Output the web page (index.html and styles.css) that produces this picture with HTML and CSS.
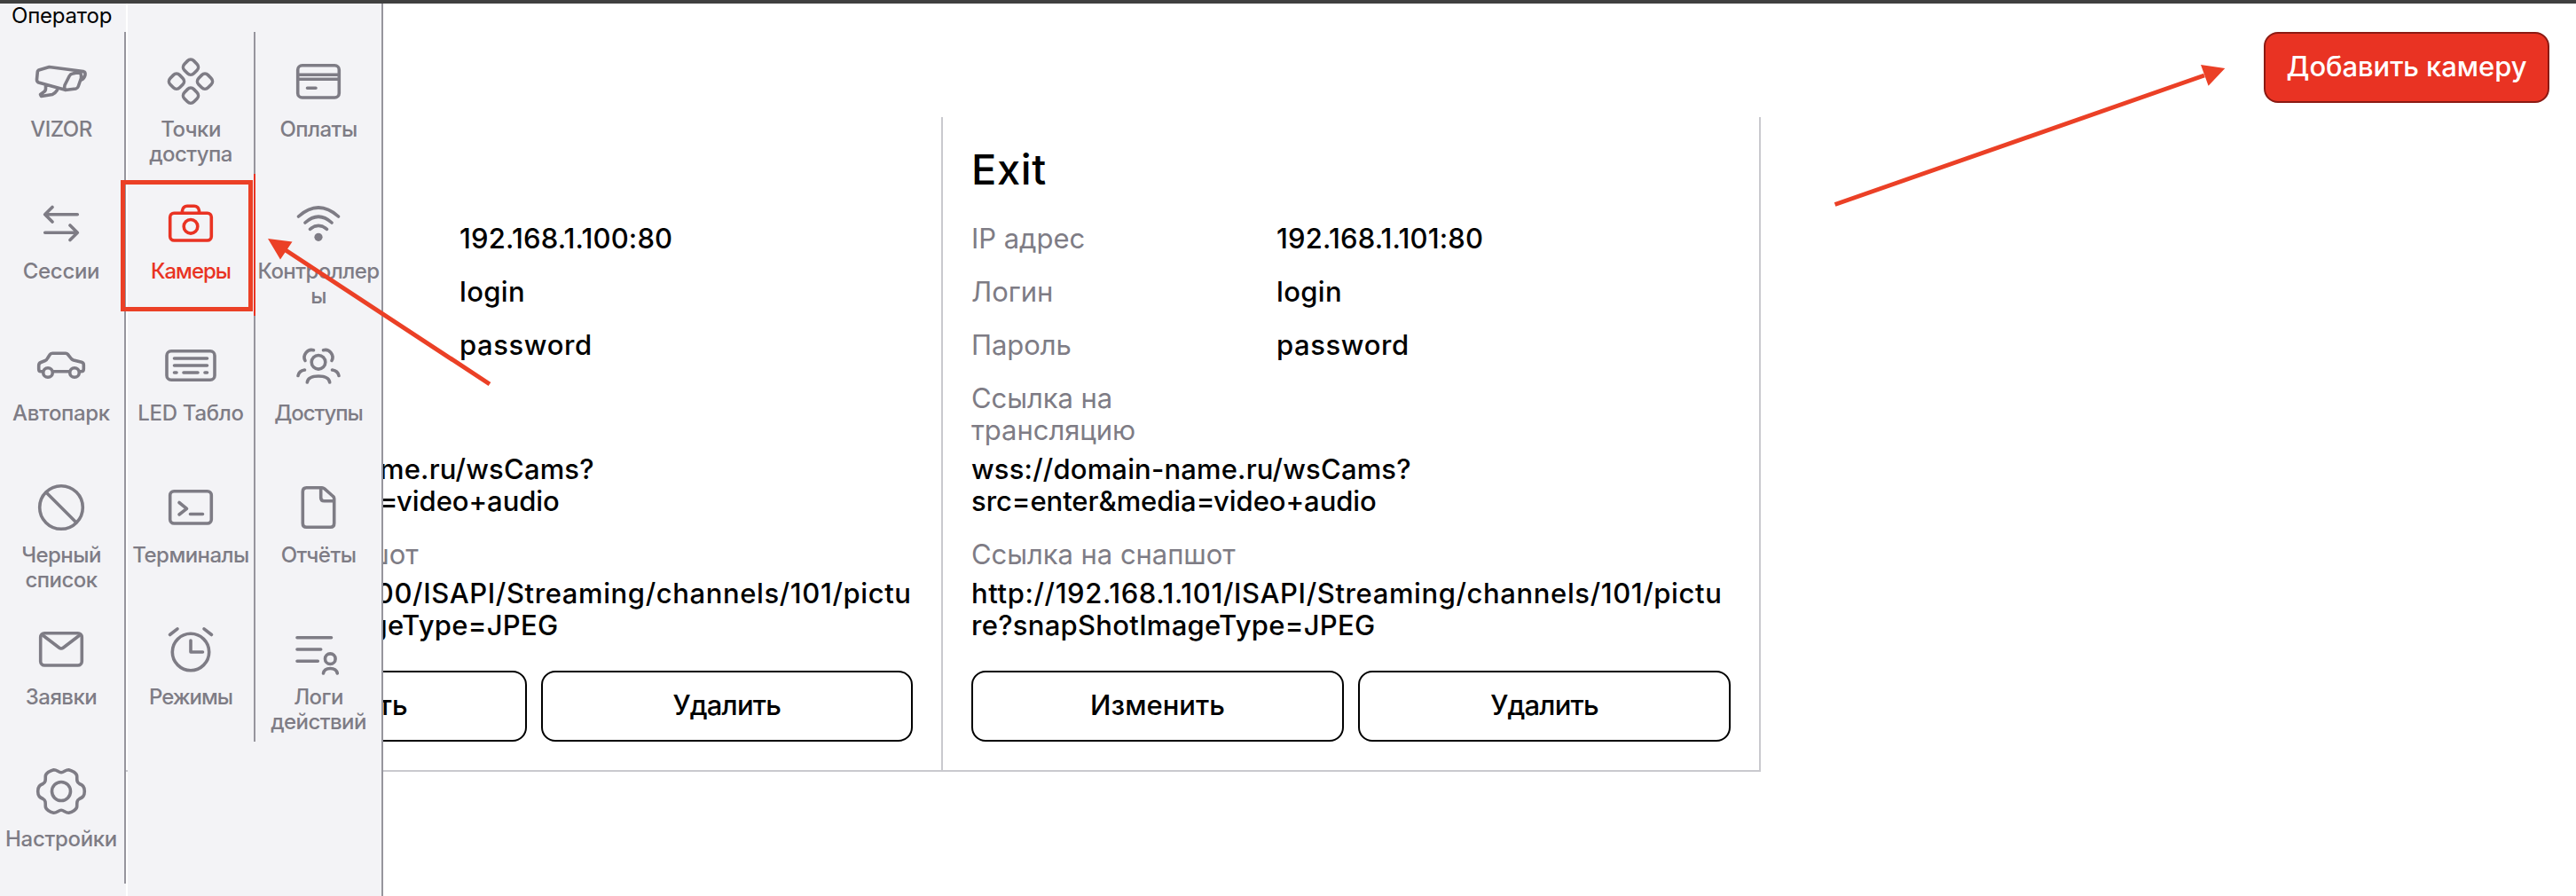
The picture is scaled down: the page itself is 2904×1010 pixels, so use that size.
FILE: index.html
```html
<!DOCTYPE html>
<html lang="ru">
<head>
<meta charset="utf-8">
<title>Камеры</title>
<link rel="stylesheet" href="styles.css">
</head>
<body>
<div class="page">
  <main class="main">
    <header class="toolbar"><button class="btn btn-primary">Добавить камеру</button></header>
    <section class="cards">
      <article class="card card-covered">
        <h2 class="card-title"></h2>
        <dl class="fields">
          <div class="field"><dt></dt><dd class="ip">192.168.1.100:80</dd></div>
          <div class="field"><dt></dt><dd class="login">login</dd></div>
          <div class="field"><dt></dt><dd class="password">password</dd></div>
          <div class="field stacked"><dt class="narrow"></dt><dd class="stream"><span class="stream-host">wss://domain-name.ru/wsCams?</span><br>src=enter&amp;media=video+audio</dd></div>
          <div class="field stacked"><dt>Ссылка на снапшот</dt><dd class="snapshot"><span class="snapshot-path">http://192.168.1.100/ISAPI/Streaming/channels/101/pictu</span><br>re?snapShotImageType=JPEG</dd></div>
        </dl>
        <div class="actions"><button class="btn">Изменить</button><button class="btn delete">Удалить</button></div>
      </article>
      <article class="card">
        <h2 class="card-title">Exit</h2>
        <dl class="fields">
          <div class="field"><dt>IP адрес</dt><dd class="ip">192.168.1.101:80</dd></div>
          <div class="field"><dt>Логин</dt><dd class="login">login</dd></div>
          <div class="field"><dt>Пароль</dt><dd class="password">password</dd></div>
          <div class="field stacked"><dt class="narrow">Ссылка на трансляцию</dt><dd class="stream"><span class="stream-host">wss://domain-name.ru/wsCams?</span><br>src=enter&amp;media=video+audio</dd></div>
          <div class="field stacked"><dt>Ссылка на снапшот</dt><dd class="snapshot"><span class="snapshot-path">http://192.168.1.101/ISAPI/Streaming/channels/101/pictu</span><br>re?snapShotImageType=JPEG</dd></div>
        </dl>
        <div class="actions"><button class="btn">Изменить</button><button class="btn delete">Удалить</button></div>
      </article>
    </section>
  </main>

  <nav class="sidebar">
    <div class="panel panel-main">
      <div class="role">Оператор</div>
      <div class="column column-first">
        <a class="item"><svg class="icon" viewBox="0 0 64 64"><path d="M35.5 41 6.5 33Q4.300 32 4.500 29.500L5.300 21Q5.500 19.300 7.500 18.700L18.500 15.500 57 20.500Q59.500 21 59 24.500 58 28.500 55 30M57 20.500 45 23Q42.500 23.300 41.300 25.500L36 36Q35 38.500 36.500 41.500L48.500 40Q50.500 39.500 51.200 37.500L54.500 28Q55 25 53.500 22M14.500 36.500V40Q14.500 42.500 12 44L8.500 46.500 9.500 48.500 22 46.500Q25 45.500 27.500 41.500"/></svg><span>VIZOR</span></a>
        <a class="item"><svg class="icon" viewBox="0 0 64 64"><path d="M50.300 21.700H13.700M22 13.500 13.700 21.700 22 30M13.700 42.300H50.300M42 34 50.300 42.300 42 50.500"/></svg><span class="wide">Сессии</span></a>
        <a class="item"><svg class="icon" viewBox="0 0 64 64"><path d="M11.500 38.700H9Q6.700 38.700 6.700 36V32Q6.700 29.500 9 28.500L14 26.500Q15.500 26 16.500 24L19 20Q20 18.300 22 18.300H37Q38.500 18.300 39.500 19.500L43.500 24.500Q44.500 25.500 46 26L55 28.300Q57.300 29 57.300 31V36Q57.300 38.700 54.500 38.700H52.500M22.500 38.700H41.500"/><circle cx="17" cy="40" r="5.300"/><circle cx="47" cy="40" r="5.300"/></svg><span class="wide">Автопарк</span></a>
        <a class="item"><svg class="icon" viewBox="0 0 64 64"><circle cx="32" cy="32" r="24.300"/><path d="M15.500 15.500 48.500 48.500"/></svg><span>Черный<br>список</span></a>
        <a class="item"><svg class="icon" viewBox="0 0 64 64"><rect x="8.700" y="13.700" width="46.600" height="36.300" rx="4.500"/><path d="M10.500 15.500 29.500 30Q32 32 34.500 30L53.500 15.500"/></svg><span>Заявки</span></a>
        <a class="item"><svg class="icon" viewBox="0 0 64 64"><circle cx="32" cy="32" r="10.500"/><path d="M32 10.700C29 10.700 27 7.500 23.500 7.700 20 8.500 14.300 11.500 14.300 15 14.300 20 14.300 22 11.500 23.500 8 25 5.700 26.500 5.700 32S8 39 11.500 40.500C14.300 42 14.300 44 14.300 49 14.300 52.500 20 55.500 23.500 56.300 27 56.500 29 53.300 32 53.300S37 56.500 40.500 56.300C44 55.500 49.700 52.500 49.700 49 49.700 44 49.700 42 52.500 40.500 56 39 58.300 37.500 58.300 32S56 25 52.500 23.500C49.700 22 49.700 20 49.700 15 49.700 11.500 44 8.500 40.500 7.700 37 7.500 35 10.700 32 10.700Z"/></svg><span class="wide">Настройки</span></a>
      </div>
    </div>
    <div class="panel panel-extra">
      <div class="column">
        <a class="item"><svg class="icon" viewBox="0 0 64 64"><rect x="24.500" y="8.200" width="15" height="15" rx="5" transform="rotate(45 32 15.700)"/><rect x="8.500" y="24.200" width="15" height="15" rx="5" transform="rotate(45 16 31.700)"/><rect x="40.500" y="24.200" width="15" height="15" rx="5" transform="rotate(45 48 31.700)"/><rect x="24.500" y="40.200" width="15" height="15" rx="5" transform="rotate(45 32 47.700)"/></svg><span>Точки<br>доступа</span></a>
        <a class="item active"><svg class="icon" viewBox="0 0 64 64"><rect x="8.700" y="20.300" width="46.600" height="30.700" rx="4.500"/><path d="M22.500 19.500V17.500Q23.500 12.300 28 12.300H36Q40.500 12.300 41.500 17.500V19.500"/><circle cx="32" cy="35.300" r="7.800"/></svg><span class="tight">Камеры</span></a>
        <a class="item"><svg class="icon" viewBox="0 0 64 64"><rect x="5" y="15.700" width="54" height="32.600" rx="5"/><path d="M13.500 24H50.500M13.500 32H50.500M13.500 40H16M24 40H40M48 40H50.500"/></svg><span class="wide">LED Табло</span></a>
        <a class="item"><svg class="icon" viewBox="0 0 64 64"><rect x="8.700" y="13.700" width="46.600" height="36.300" rx="4.500"/><path d="M19 26.500 27.500 33.300 19 40M31.500 39.500H45.500"/></svg><span>Терминалы</span></a>
        <a class="item"><svg class="icon" viewBox="0 0 64 64"><circle cx="32" cy="35" r="20.700"/><path d="M32 22V35H45.500M8.500 15.500 17 8.800M47 8.800 55.500 15.500"/></svg><span class="tight">Режимы</span></a>
      </div>
      <div class="column column-last">
        <a class="item"><svg class="icon" viewBox="0 0 64 64"><rect x="8.700" y="13.700" width="46.600" height="36.300" rx="5"/><path d="M9 24.300H55M9 29.300H55M19.500 39.300H29"/></svg><span>Оплаты</span></a>
        <a class="item"><svg class="icon" viewBox="0 0 64 64"><path d="M9.500 24Q32 4 54.500 24M17 31Q32 17.500 47 31M22.500 38.300Q32 30.500 41.500 38.300"/><circle class="solid" cx="32" cy="47.300" r="4.600"/></svg><span>Контроллер<br>ы</span></a>
        <a class="item"><svg class="icon" viewBox="0 0 64 64"><circle cx="32" cy="28.300" r="7.800"/><path d="M26.500 14.700A8.300 8.300 0 0 0 17 26.500M37.500 14.700A8.300 8.300 0 0 1 47 26.500M19.300 51C20 46.500 25 44 32 44S44 46.500 44.700 51M9 43.500Q10 38 16.500 37M55 43.500Q54 38 47.500 37"/></svg><span class="tight">Доступы</span></a>
        <a class="item"><svg class="icon" viewBox="0 0 64 64"><path d="M18.500 9.700H36Q37.500 9.700 38.500 10.700L48.500 19.500Q49.700 20.500 49.700 22V50Q49.700 54.300 45.500 54.300H18.500Q14.300 54.300 14.300 50V14Q14.300 9.700 18.500 9.700ZM34.700 10V21Q34.700 24.700 38.500 24.700H49.500"/></svg><span>Отчёты</span></a>
        <a class="item"><svg class="icon" viewBox="0 0 64 64"><path d="M8 18.700H46.500M8 32H34.700M8 45.300H31.300M37.500 59Q38.500 53.500 45.300 53.500T53.300 59"/><circle cx="45.300" cy="42.700" r="5.800"/></svg><span>Логи<br>действий</span></a>
      </div>
    </div>
  </nav>

  <div class="highlight"></div>
  <svg class="arrows" viewBox="0 0 2904 1010">
    <path class="shaft" d="M322 282 552 433M2485 85 2068.600 230.500"/>
    <path class="head" d="M302 269 329.500 272.500 316 292.500ZM2508.300 77 2481 73 2489.600 96.700Z"/>
  </svg>
</div>
</body>
</html>
```
FILE: styles.css
```css
* { box-sizing: border-box; }
body { margin: 0; background: #fff; font-family: Inter, "Liberation Sans", sans-serif; color: #000; }
.page { position: relative; width: 2904px; height: 1010px; border-top: 4px solid #404040; overflow: hidden; }

.main { padding-left: 142px; }
.toolbar { display: flex; justify-content: flex-end; height: 128px; padding: 32px 30px 16px 0; }
.btn { flex: 1; height: 80px; padding: 0 0 2px; border: 2px solid #000; border-radius: 16px; background: #fff; color: #000; font: 500 31px/36px Inter, "Liberation Sans", sans-serif; }
.btn-primary { flex: 0 0 322px; background: #e93323; border-color: #8b1a13; color: #fff; letter-spacing: -.08px; }
.delete { letter-spacing: -.8px; }

.cards { display: flex; }
.card { width: 922px; height: 738px; padding: 31px 32px 0; border-right: 2px solid #c9c9ce; border-bottom: 2px solid #c9c9ce; }
.card-covered { width: 921px; }
.card-title { height: 56px; margin: 0 0 32px; font-size: 47px; line-height: 56px; font-weight: 500; letter-spacing: .6px; }
.fields { display: flex; flex-direction: column; gap: 24px; margin: 0 0 33px; font-size: 31px; line-height: 36px; }
.field { display: flex; }
.stacked { flex-direction: column; gap: 8px; }
dt { width: 344px; min-height: 36px; color: #7e7c85; letter-spacing: -.05px; }
dt.narrow { width: 240px; min-height: 72px; }
dd { margin: 0; font-weight: 500; }
.ip { letter-spacing: .18px; }
.login { letter-spacing: .36px; }
.password { letter-spacing: .6px; }
.stream { letter-spacing: -.06px; }
.stream-host { letter-spacing: .17px; }
.snapshot { letter-spacing: .28px; white-space: nowrap; }
.snapshot-path { letter-spacing: .61px; }
.actions { display: flex; gap: 16px; }

.sidebar { position: absolute; left: 0; top: 0; bottom: 0; display: flex; gap: 2px; }
.panel { background: #f3f3f6; }
.panel-main { width: 142px; }
.panel-extra { display: flex; align-items: flex-start; width: 288px; padding-top: 32px; border-right: 2px solid #96959d; }
.role { height: 32px; padding-left: 13px; font-size: 24px; line-height: 28px; letter-spacing: -.2px; }
.column { width: 144px; border-right: 2px solid #96959d; }
.column-first { width: 142px; }
.column-first .item { padding-right: 2px; }
.column-last { width: 142px; border-right: 0; }
.item { display: flex; flex-direction: column; align-items: center; gap: 8px; height: 160px; padding-top: 24px; color: #7e7c85; font-size: 24px; line-height: 28px; font-weight: 500; letter-spacing: -.55px; text-align: center; }
.item .wide { letter-spacing: -.32px; }
.item .tight { letter-spacing: -1.05px; }
.active { color: #e93323; margin-right: -2px; border-right: 2px solid #e93323; }
.icon { flex: none; width: 64px; height: 64px; fill: none; stroke: currentColor; stroke-width: 3.6; stroke-linecap: round; stroke-linejoin: round; }
.solid { fill: currentColor; stroke: none; }

.highlight { position: absolute; left: 136px; top: 199px; width: 149px; height: 148px; border: 5px solid #eb4026; }
.arrows { position: absolute; left: 0; top: -4px; width: 2904px; height: 1010px; pointer-events: none; }
.shaft { fill: none; stroke: #eb4026; stroke-width: 5; }
.head { fill: #eb4026; }
```
